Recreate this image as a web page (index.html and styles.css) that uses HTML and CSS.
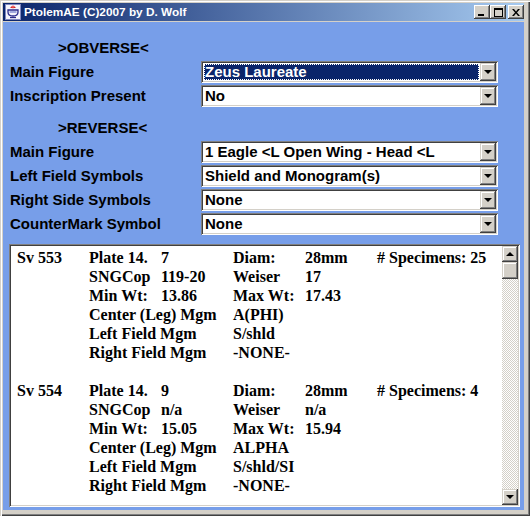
FILE: index.html
```html
<!DOCTYPE html>
<html>
<head>
<meta charset="utf-8">
<link rel="stylesheet" href="styles.css">
</head>
<body>
<div class="window">
  <div class="titlebar">
    <svg class="appicon" width="16" height="16" viewBox="0 0 16 16">
      <rect x="0.5" y="0.5" width="15" height="15" fill="#f4f4fc" stroke="#8088c0"/>
      <path d="M5 3.5 Q8 0.5 11 3.5 Q8 5 5 3.5Z" fill="#d02020"/>
      <circle cx="8" cy="2.6" r="1.2" fill="#f06060"/>
      <path d="M3 6 H13 V8 Q13 12 8 12 Q3 12 3 8Z" fill="none" stroke="#2a2a8a" stroke-width="1.3"/>
      <path d="M4.5 8 H11.5" stroke="#5060c0" stroke-width="1"/>
      <path d="M5 13.5 H11" stroke="#2a2a8a" stroke-width="1.3"/>
    </svg>
    <span class="title">PtolemAE (C)2007 by D. Wolf</span>
    <div class="tbuttons">
      <span class="tbtn"><svg width="8" height="7" viewBox="0 0 8 7"><rect x="0" y="5" width="6" height="2" fill="#000"/></svg></span>
      <span class="tbtn"><svg width="9" height="9" viewBox="0 0 9 9"><rect x="0.5" y="0.5" width="8" height="8" fill="none" stroke="#000"/><rect x="0" y="0" width="9" height="2" fill="#000"/></svg></span>
      <span class="tbtn close"><svg width="8" height="7" viewBox="0 0 8 7"><path d="M0 0 H2 L4 2.5 L6 0 H8 L5 3.5 L8 7 H6 L4 4.5 L2 7 H0 L3 3.5Z" fill="#000"/></svg></span>
    </div>
  </div>
  <div class="client">
    <div class="form">
      <div class="head head-first">&gt;OBVERSE&lt;</div>
      <div class="row">
        <div class="label">Main Figure</div>
        <div class="combo selected"><span class="val">Zeus Laureate</span><span class="drop"><i class="tri"></i></span></div>
      </div>
      <div class="row">
        <div class="label">Inscription Present</div>
        <div class="combo"><span class="val">No</span><span class="drop"><i class="tri"></i></span></div>
      </div>
      <div class="head head-second">&gt;REVERSE&lt;</div>
      <div class="row">
        <div class="label">Main Figure</div>
        <div class="combo"><span class="val">1 Eagle &lt;L Open Wing - Head &lt;L</span><span class="drop"><i class="tri"></i></span></div>
      </div>
      <div class="row">
        <div class="label">Left Field Symbols</div>
        <div class="combo"><span class="val">Shield and Monogram(s)</span><span class="drop"><i class="tri"></i></span></div>
      </div>
      <div class="row">
        <div class="label">Right Side Symbols</div>
        <div class="combo"><span class="val">None</span><span class="drop"><i class="tri"></i></span></div>
      </div>
      <div class="row">
        <div class="label">CounterMark Symbol</div>
        <div class="combo"><span class="val">None</span><span class="drop"><i class="tri"></i></span></div>
      </div>
    </div>
    <div class="listbox">
      <div class="list-content">
        <div class="record">
          <span class="c1">Sv 553</span><span class="c2">Plate 14.</span><span class="c3">7</span><span class="c4">Diam:</span><span class="c5">28mm</span><span class="c6"># Specimens: 25</span>
          <span class="c2">SNGCop</span><span class="c3">119-20</span><span class="c4">Weiser</span><span class="c5">17</span>
          <span class="c2">Min Wt:</span><span class="c3">13.86</span><span class="c4">Max Wt:</span><span class="c5">17.43</span>
          <span class="c2 wide">Center (Leg) Mgm</span><span class="c4">A(PHI)</span>
          <span class="c2 wide">Left Field Mgm</span><span class="c4">S/shld</span>
          <span class="c2 wide">Right Field Mgm</span><span class="c4">-NONE-</span>
        </div>
        <div class="record">
          <span class="c1">Sv 554</span><span class="c2">Plate 14.</span><span class="c3">9</span><span class="c4">Diam:</span><span class="c5">28mm</span><span class="c6"># Specimens: 4</span>
          <span class="c2">SNGCop</span><span class="c3">n/a</span><span class="c4">Weiser</span><span class="c5">n/a</span>
          <span class="c2">Min Wt:</span><span class="c3">15.05</span><span class="c4">Max Wt:</span><span class="c5">15.94</span>
          <span class="c2 wide">Center (Leg) Mgm</span><span class="c4">ALPHA</span>
          <span class="c2 wide">Left Field Mgm</span><span class="c4">S/shld/SI</span>
          <span class="c2 wide">Right Field Mgm</span><span class="c4">-NONE-</span>
        </div>
      </div>
      <div class="vscroll">
        <span class="sbtn"><i class="tri-up"></i></span>
        <span class="thumb"></span>
        <span class="track"></span>
        <span class="sbtn"><i class="tri"></i></span>
      </div>
    </div>
  </div>
</div>
</body>
</html>
```

FILE: styles.css
```css
* { box-sizing: border-box; }
html, body { margin: 0; padding: 0; background: #d4d0c8; }
body { width: 530px; height: 516px; overflow: hidden; }

.window {
  width: 530px;
  height: 516px;
  background: #d4d0c8;
  padding: 3px 6px 6px 3px;
  display: flex;
  flex-direction: column;
  box-shadow: inset 1px 1px 0 #d4d0c8, inset 2px 2px 0 #ffffff, inset -1px -1px 0 #404040, inset -2px -2px 0 #808080;
}

.titlebar {
  height: 18px;
  flex: none;
  display: flex;
  align-items: center;
  padding-left: 2px;
  background: linear-gradient(to right, #0a246a 0%, #a6caf0 100%);
  color: #fff;
}
.appicon { flex: none; display: block; }
.title {
  margin-left: 3px;
  font-family: "Liberation Sans", Arial, sans-serif;
  font-weight: bold;
  font-size: 11.8px;
  line-height: 14px;
  white-space: nowrap;
}
.tbuttons {
  margin-left: auto;
  display: flex;
}
.tbtn {
  width: 16px;
  height: 14px;
  background: #d4d0c8;
  display: flex;
  align-items: center;
  justify-content: center;
  box-shadow: inset -1px -1px 0 #404040, inset 1px 1px 0 #ffffff, inset -2px -2px 0 #808080;
}
.tbtn svg { display: block; }
.tbtn.close { margin-left: 2px; }

.client {
  flex: 1;
  margin-top: 1px;
  background: #779ee9;
  display: flex;
  flex-direction: column;
  font-family: "Liberation Sans", Arial, sans-serif;
  font-weight: bold;
  font-size: 15px;
  color: #000;
  overflow: hidden;
}

.form { display: flex; flex-direction: column; padding-left: 7px; }
.head {
  height: 17px;
  line-height: 17px;
  padding-left: 48px;
  margin-bottom: 5px;
  white-space: nowrap;
}
.head-first { margin-top: 17px; }
.head-second { margin-top: 10px; }

.row {
  display: flex;
  align-items: center;
  height: 22px;
  margin-bottom: 2px;
}
.label {
  width: 191px;
  flex: none;
  white-space: nowrap;
  line-height: 17px;
  margin-top: -1px;
}
.combo {
  width: 297px;
  height: 22px;
  flex: none;
  background: #fff;
  display: flex;
  padding: 2px;
  box-shadow: inset 1px 1px 0 #808080, inset -1px -1px 0 #ffffff, inset 2px 2px 0 #404040, inset -2px -2px 0 #d4d0c8;
}
.val {
  flex: 1;
  margin: 1px;
  padding-left: 1px;
  line-height: 16px;
  white-space: nowrap;
  overflow: hidden;
}
.selected .val {
  background: #0a246a;
  color: #fff;
  outline: 1px dotted #ffffff;
  outline-offset: -1px;
}
.drop {
  width: 16px;
  height: 18px;
  flex: none;
  background: #d4d0c8;
  display: flex;
  align-items: center;
  justify-content: center;
  box-shadow: inset -1px -1px 0 #404040, inset 1px 1px 0 #d4d0c8, inset -2px -2px 0 #808080, inset 2px 2px 0 #ffffff;
}
.tri {
  display: block;
  width: 0;
  height: 0;
  border-left: 4px solid transparent;
  border-right: 4px solid transparent;
  border-top: 4px solid #000;
}
.tri-up {
  display: block;
  width: 0;
  height: 0;
  border-left: 4px solid transparent;
  border-right: 4px solid transparent;
  border-bottom: 4px solid #000;
}

.listbox {
  margin: 7px 0 0 6px;
  width: 511px;
  height: 263px;
  flex: none;
  background: #fff;
  padding: 2px;
  display: flex;
  box-shadow: inset 1px 1px 0 #808080, inset -1px -1px 0 #ffffff, inset 2px 2px 0 #404040, inset -2px -2px 0 #d4d0c8;
}
.list-content {
  flex: 1;
  overflow: hidden;
  padding: 2px 0 0 6px;
  font-family: "Liberation Serif", "Times New Roman", serif;
  font-weight: bold;
  font-size: 16px;
}
.record {
  display: grid;
  grid-template-columns: 72px 72px 72px 72px 72px auto;
  grid-auto-rows: 19px;
  line-height: 19px;
  margin-bottom: 19px;
  white-space: nowrap;
}
.c1 { grid-column: 1; }
.c2 { grid-column: 2; }
.c3 { grid-column: 3; }
.c4 { grid-column: 4; }
.c5 { grid-column: 5; }
.c6 { grid-column: 6; }
.c2.wide { grid-column: 2 / 4; }

.vscroll {
  width: 16px;
  flex: none;
  display: flex;
  flex-direction: column;
}
.sbtn, .thumb {
  width: 16px;
  height: 16px;
  flex: none;
  background: #d4d0c8;
  display: flex;
  align-items: center;
  justify-content: center;
  box-shadow: inset -1px -1px 0 #404040, inset 1px 1px 0 #d4d0c8, inset -2px -2px 0 #808080, inset 2px 2px 0 #ffffff;
}
.thumb { height: 17px; }
.track {
  flex: 1;
  background-color: #ffffff;
  background-image: repeating-conic-gradient(#d4d0c8 0 25%, #ffffff 0 50%);
  background-size: 2px 2px;
}
```
